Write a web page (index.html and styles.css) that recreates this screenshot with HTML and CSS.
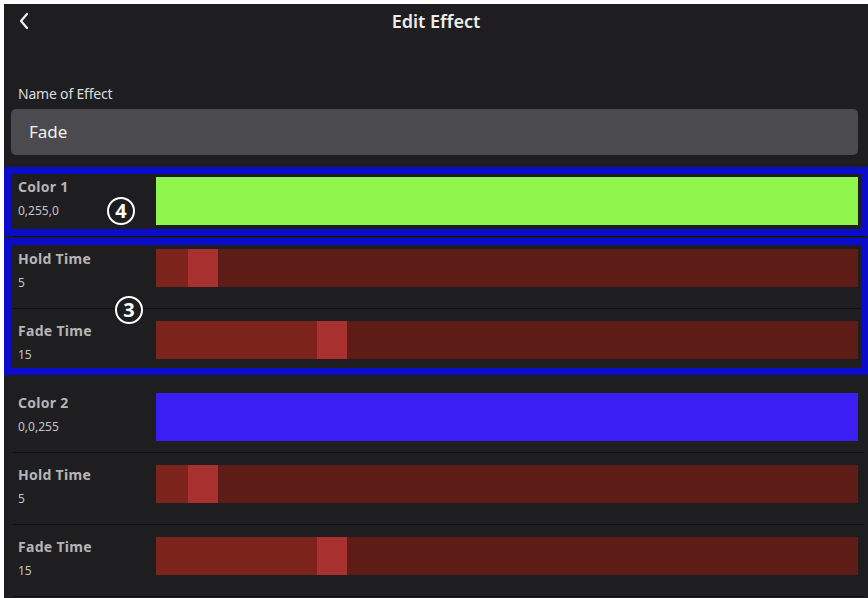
FILE: index.html
```html
<!DOCTYPE html>
<html>
<head>
<meta charset="utf-8">
<link rel="stylesheet" href="styles.css">
</head>
<body>
<div class="screen">
  <header class="topbar">
    <svg class="back" width="12" height="18" viewBox="0 0 12 18"><path d="M9 2 L3 9 L9 16" fill="none" stroke="#f2f2f2" stroke-width="2.2" stroke-linecap="round" stroke-linejoin="round"/></svg>
    <h1 class="title">Edit Effect</h1>
  </header>

  <section class="name-section">
    <div class="field-label">Name of Effect</div>
    <div class="input">Fade</div>
  </section>

  <div class="group group-a">
    <div class="row">
      <div class="meta"><div class="label">Color 1</div><div class="value">0,255,0</div></div>
      <div class="swatch green"></div>
    </div>
    <span class="badge badge-a">4</span>
  </div>

  <div class="group group-b">
    <div class="row">
      <div class="meta"><div class="label">Hold Time</div><div class="value">5</div></div>
      <div class="slider"><div class="fill" style="width:32px"></div><div class="thumb"></div></div>
    </div>
    <div class="row last">
      <div class="meta"><div class="label">Fade Time</div><div class="value">15</div></div>
      <div class="slider"><div class="fill" style="width:161px"></div><div class="thumb"></div></div>
    </div>
    <span class="badge badge-b">3</span>
  </div>

  <div class="group">
    <div class="row">
      <div class="meta"><div class="label">Color 2</div><div class="value">0,0,255</div></div>
      <div class="swatch blue"></div>
    </div>
    <div class="row">
      <div class="meta"><div class="label">Hold Time</div><div class="value">5</div></div>
      <div class="slider"><div class="fill" style="width:32px"></div><div class="thumb"></div></div>
    </div>
    <div class="row">
      <div class="meta"><div class="label">Fade Time</div><div class="value">15</div></div>
      <div class="slider"><div class="fill" style="width:161px"></div><div class="thumb"></div></div>
    </div>
  </div>
</div>
</body>
</html>
```

FILE: styles.css
```css
* { box-sizing: border-box; }
html, body { margin: 0; padding: 0; background: #ffffff; }
body {
  font-family: "Noto Sans", "Open Sans", sans-serif;
  padding: 4px 0 0 4px;
  width: 868px;
  height: 598px;
  overflow: hidden;
}
.screen {
  width: 864px;
  height: 594px;
  background: #1e1e21;
  overflow: hidden;
  color: #e6e6e6;
}
.topbar {
  height: 34px;
  display: flex;
  align-items: center;
  justify-content: center;
  position: relative;
}
.back {
  position: absolute;
  left: 14px;
  top: 8px;
}
.title {
  margin: 0;
  font-size: 18px;
  font-weight: 600;
  color: #ececec;
  line-height: 34px;
}
.name-section {
  padding: 46px 10px 0 7px;
}
.field-label {
  font-size: 14px;
  line-height: 20px;
  color: #dcdcdc;
  padding-left: 7px;
  letter-spacing: -0.2px;
}
.input {
  margin-top: 5px;
  height: 46px;
  background: #4b4b4f;
  border-radius: 5px;
  font-size: 17px;
  color: #f0f0f0;
  line-height: 46px;
  padding-left: 18px;
}
.group { position: relative; }
.group-a { margin-top: 10px; }
.group-a::after, .group-b::after {
  content: "";
  position: absolute;
  left: 0;
  right: 0;
  border: 7px solid #0b0bcb;
  pointer-events: none;
}
.group-a::after { top: 2px; bottom: 1px; }
.group-b::after { top: 1px; bottom: 6px; }
.row {
  height: 72px;
  margin: 0 4px 0 9px;
  display: flex;
  align-items: flex-start;
  border-bottom: 1px solid #101012;
}
.row.last { border-bottom-color: transparent; }
.meta {
  width: 143px;
  flex: none;
  padding: 12px 0 0 5px;
}
.label {
  font-size: 14px;
  font-weight: 700;
  line-height: 20px;
  color: #b5b5b5;
  letter-spacing: 0.3px;
}
.value {
  margin-top: 4px;
  font-size: 12px;
  line-height: 20px;
  color: #c4c4c4;
}
.swatch {
  flex: 1;
  margin: 12px 6px 0 0;
  height: 48px;
}
.green { background: #8ff54c; }
.blue { background: #3a1ef4; }
.slider {
  flex: 1;
  margin: 12px 6px 0 0;
  height: 38px;
  background: #5e1c17;
  display: flex;
}
.fill { background: #7c231b; height: 100%; }
.thumb { width: 30px; height: 100%; background: #a8302e; }
.badge {
  position: absolute;
  width: 28px;
  height: 28px;
  border: 2px solid #ffffff;
  border-radius: 50%;
  color: #ffffff;
  font-weight: 700;
  font-size: 20px;
  line-height: 24px;
  text-align: center;
  background: #1e1e21;
}
.badge-a { left: 103px; top: 32px; }
.badge-b { left: 111px; top: 59px; }
```
